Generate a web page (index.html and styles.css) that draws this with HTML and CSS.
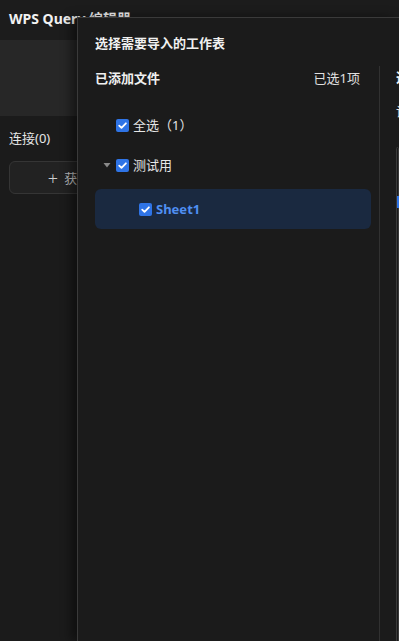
FILE: index.html
```html
<!DOCTYPE html>
<html lang="zh">
<head>
<meta charset="utf-8">
<link rel="stylesheet" href="styles.css">
</head>
<body>
<div class="app">
  <div class="app-head">WPS Query 编辑器</div>
  <div class="app-panel"></div>
  <div class="app-conn">连接(0)</div>
  <div class="app-btn"><span class="plus">+</span>获取数据</div>

  <div class="dialog">
    <div class="dlg-title">选择需要导入的工作表</div>
    <div class="dlg-body">
      <div class="col-left">
        <div class="col-head">
          <span class="head-title">已添加文件</span>
          <span class="head-count">已选1项</span>
        </div>
        <div class="tree">
          <div class="row row-all">
            <span class="cb"><svg viewBox="0 0 13 13" width="13" height="13"><path d="M3.2 6.6 L5.5 8.9 L9.9 4.3" fill="none" stroke="#fff" stroke-width="1.8" stroke-linecap="round" stroke-linejoin="round"/></svg></span>
            <span class="label">全选（1）</span>
          </div>
          <div class="row row-file">
            <span class="caret"><svg viewBox="0 0 8 8" width="8" height="8"><path d="M0.5 2 L7.5 2 L4 6.5 Z" fill="#8a8a8a"/></svg></span>
            <span class="cb"><svg viewBox="0 0 13 13" width="13" height="13"><path d="M3.2 6.6 L5.5 8.9 L9.9 4.3" fill="none" stroke="#fff" stroke-width="1.8" stroke-linecap="round" stroke-linejoin="round"/></svg></span>
            <span class="label">测试用</span>
          </div>
          <div class="row row-sheet">
            <span class="cb"><svg viewBox="0 0 13 13" width="13" height="13"><path d="M3.2 6.6 L5.5 8.9 L9.9 4.3" fill="none" stroke="#fff" stroke-width="1.8" stroke-linecap="round" stroke-linejoin="round"/></svg></span>
            <span class="label sheet">Sheet1</span>
          </div>
        </div>
      </div>
      <div class="col-right">
        <div class="r-head">选择</div>
        <div class="r-sub">设置</div>
        <div class="r-box"><span class="r-mark"></span></div>
      </div>
    </div>
  </div>
</div>
</body>
</html>
```
FILE: styles.css
```css
* { box-sizing: border-box; }
html, body { margin: 0; padding: 0; }
body {
  width: 399px;
  height: 641px;
  overflow: hidden;
  background: #1b1b1b;
  font-family: "Noto Sans", "Noto Sans CJK SC", sans-serif;
  color: #e6e6e6;
}
.app {
  position: relative;
  width: 399px;
  height: 641px;
  background: #1b1b1b;
  overflow: hidden;
}
.app-head {
  height: 40px;
  padding: 9px 0 0 9px;
  font-size: 14px;
  font-weight: 700;
  color: #f2f2f2;
  line-height: 20px;
  background: #1c1c1c;
}
.app-panel {
  height: 76px;
  background: #272727;
}
.app-conn {
  margin: 13px 0 0 9px;
  font-size: 13px;
  line-height: 18px;
  color: #e6e6e6;
}
.app-btn {
  margin: 14px 0 0 9px;
  width: 146px;
  height: 33px;
  border: 1px solid #353535;
  border-radius: 6px;
  background: #222;
  display: flex;
  align-items: center;
  justify-content: center;
  gap: 6px;
  font-size: 13px;
  color: #bdbdbd;
}
.plus { font-size: 18px; font-weight: 300; line-height: 1; color: #cfcfcf; }

.dialog {
  position: absolute;
  left: 77px;
  top: 17px;
  right: 0;
  bottom: 0;
  background: #1b1b1b;
  border-left: 1px solid #3a3a3a;
  border-top: 1px solid #3a3a3a;
  box-shadow: -6px 0 10px rgba(0, 0, 0, 0.45);
  display: flex;
  flex-direction: column;
  overflow: hidden;
}
.dlg-title {
  flex: none;
  height: 48px;
  padding-left: 17px;
  display: flex;
  align-items: center;
  font-size: 13px;
  font-weight: 700;
  color: #f0f0f0;
}
.dlg-body {
  flex: 1;
  min-height: 0;
  display: flex;
}
.col-left {
  width: 302px;
  flex: none;
  border-right: 1px solid #313131;
  padding: 0 8px 0 17px;
}
.col-head {
  height: 22px;
  display: flex;
  align-items: center;
  justify-content: space-between;
  padding-right: 11px;
  font-size: 13px;
}
.head-title { font-weight: 700; color: #f0f0f0; }
.head-count { color: #e0e0e0; }
.tree { margin-top: 17px; display: flex; flex-direction: column; }
.row {
  flex: none;
  height: 40px;
  display: flex;
  align-items: center;
  font-size: 13px;
  color: #e6e6e6;
}
.row-all { padding-left: 21px; }
.row-file { padding-left: 8px; }
.row-sheet {
  margin-top: 4px;
  padding-left: 44px;
  background: #1a2940;
  border-radius: 6px;
}
.caret { width: 8px; height: 8px; display: flex; margin-right: 5px; }
.cb {
  width: 13px;
  height: 13px;
  border-radius: 2px;
  background: #2f74e6;
  display: flex;
  margin-right: 4px;
  flex: none;
}
.label { line-height: 18px; }
.sheet { color: #4f8ff2; font-weight: 700; }

.col-right {
  flex: 1;
  min-width: 0;
  padding-left: 16px;
  overflow: hidden;
  white-space: nowrap;
  display: flex;
  flex-direction: column;
}
.r-head {
  flex: none;
  height: 22px;
  line-height: 22px;
  font-size: 13px;
  font-weight: 700;
  color: #f0f0f0;
}
.r-sub {
  flex: none;
  margin-top: 14px;
  font-size: 13px;
  line-height: 18px;
  color: #e0e0e0;
}
.r-box {
  flex: none;
  margin-top: 27px;
  height: 520px;
  border: 1px solid #3a3a3a;
  border-radius: 4px;
  position: relative;
}
.r-mark {
  position: absolute;
  left: 0;
  top: 48px;
  width: 6px;
  height: 12px;
  background: #2f74e6;
}
```
